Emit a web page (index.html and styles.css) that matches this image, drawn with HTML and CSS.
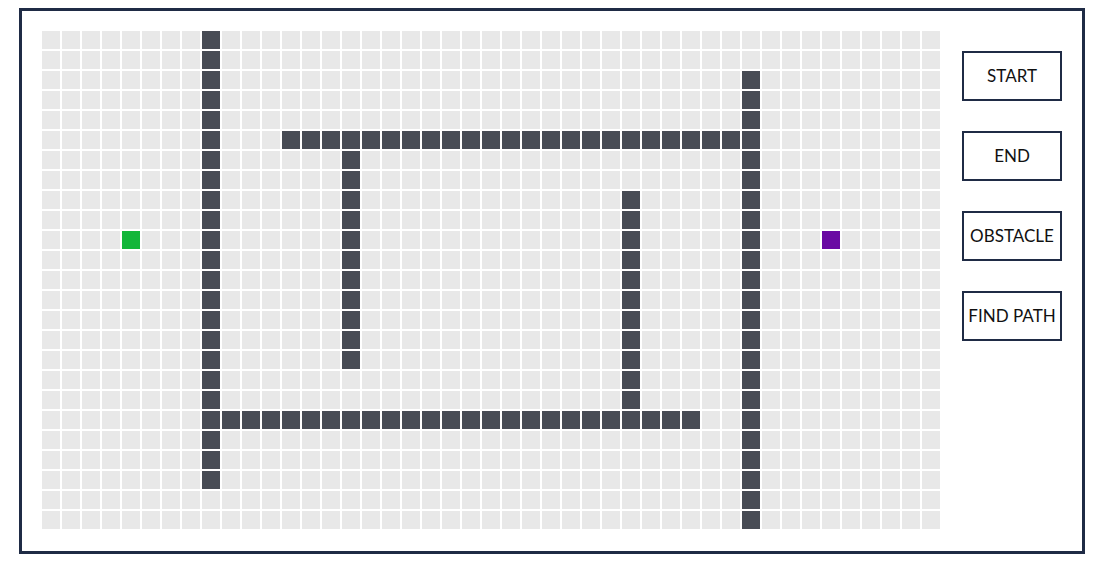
FILE: index.html
```html
<!DOCTYPE html>
<html lang="en">
<head>
<meta charset="utf-8">
<title>Path Finder</title>
<link rel="stylesheet" href="styles.css">
</head>
<body>
<main class="board">
  <div class="grid">
<i></i><i></i><i></i><i></i><i></i> <i></i><i></i><i></i><i class="w"></i><i></i> <i></i><i></i><i></i><i></i><i></i> <i></i><i></i><i></i><i></i><i></i> <i></i><i></i><i></i><i></i><i></i> <i></i><i></i><i></i><i></i><i></i> <i></i><i></i><i></i><i></i><i></i> <i></i><i></i><i></i><i></i><i></i> <i></i><i></i><i></i><i></i><i></i>
<i></i><i></i><i></i><i></i><i></i> <i></i><i></i><i></i><i class="w"></i><i></i> <i></i><i></i><i></i><i></i><i></i> <i></i><i></i><i></i><i></i><i></i> <i></i><i></i><i></i><i></i><i></i> <i></i><i></i><i></i><i></i><i></i> <i></i><i></i><i></i><i></i><i></i> <i></i><i></i><i></i><i></i><i></i> <i></i><i></i><i></i><i></i><i></i>
<i></i><i></i><i></i><i></i><i></i> <i></i><i></i><i></i><i class="w"></i><i></i> <i></i><i></i><i></i><i></i><i></i> <i></i><i></i><i></i><i></i><i></i> <i></i><i></i><i></i><i></i><i></i> <i></i><i></i><i></i><i></i><i></i> <i></i><i></i><i></i><i></i><i></i> <i class="w"></i><i></i><i></i><i></i><i></i> <i></i><i></i><i></i><i></i><i></i>
<i></i><i></i><i></i><i></i><i></i> <i></i><i></i><i></i><i class="w"></i><i></i> <i></i><i></i><i></i><i></i><i></i> <i></i><i></i><i></i><i></i><i></i> <i></i><i></i><i></i><i></i><i></i> <i></i><i></i><i></i><i></i><i></i> <i></i><i></i><i></i><i></i><i></i> <i class="w"></i><i></i><i></i><i></i><i></i> <i></i><i></i><i></i><i></i><i></i>
<i></i><i></i><i></i><i></i><i></i> <i></i><i></i><i></i><i class="w"></i><i></i> <i></i><i></i><i></i><i></i><i></i> <i></i><i></i><i></i><i></i><i></i> <i></i><i></i><i></i><i></i><i></i> <i></i><i></i><i></i><i></i><i></i> <i></i><i></i><i></i><i></i><i></i> <i class="w"></i><i></i><i></i><i></i><i></i> <i></i><i></i><i></i><i></i><i></i>
<i></i><i></i><i></i><i></i><i></i> <i></i><i></i><i></i><i class="w"></i><i></i> <i></i><i></i><i class="w"></i><i class="w"></i><i class="w"></i> <i class="w"></i><i class="w"></i><i class="w"></i><i class="w"></i><i class="w"></i> <i class="w"></i><i class="w"></i><i class="w"></i><i class="w"></i><i class="w"></i> <i class="w"></i><i class="w"></i><i class="w"></i><i class="w"></i><i class="w"></i> <i class="w"></i><i class="w"></i><i class="w"></i><i class="w"></i><i class="w"></i> <i class="w"></i><i></i><i></i><i></i><i></i> <i></i><i></i><i></i><i></i><i></i>
<i></i><i></i><i></i><i></i><i></i> <i></i><i></i><i></i><i class="w"></i><i></i> <i></i><i></i><i></i><i></i><i></i> <i class="w"></i><i></i><i></i><i></i><i></i> <i></i><i></i><i></i><i></i><i></i> <i></i><i></i><i></i><i></i><i></i> <i></i><i></i><i></i><i></i><i></i> <i class="w"></i><i></i><i></i><i></i><i></i> <i></i><i></i><i></i><i></i><i></i>
<i></i><i></i><i></i><i></i><i></i> <i></i><i></i><i></i><i class="w"></i><i></i> <i></i><i></i><i></i><i></i><i></i> <i class="w"></i><i></i><i></i><i></i><i></i> <i></i><i></i><i></i><i></i><i></i> <i></i><i></i><i></i><i></i><i></i> <i></i><i></i><i></i><i></i><i></i> <i class="w"></i><i></i><i></i><i></i><i></i> <i></i><i></i><i></i><i></i><i></i>
<i></i><i></i><i></i><i></i><i></i> <i></i><i></i><i></i><i class="w"></i><i></i> <i></i><i></i><i></i><i></i><i></i> <i class="w"></i><i></i><i></i><i></i><i></i> <i></i><i></i><i></i><i></i><i></i> <i></i><i></i><i></i><i></i><i class="w"></i> <i></i><i></i><i></i><i></i><i></i> <i class="w"></i><i></i><i></i><i></i><i></i> <i></i><i></i><i></i><i></i><i></i>
<i></i><i></i><i></i><i></i><i></i> <i></i><i></i><i></i><i class="w"></i><i></i> <i></i><i></i><i></i><i></i><i></i> <i class="w"></i><i></i><i></i><i></i><i></i> <i></i><i></i><i></i><i></i><i></i> <i></i><i></i><i></i><i></i><i class="w"></i> <i></i><i></i><i></i><i></i><i></i> <i class="w"></i><i></i><i></i><i></i><i></i> <i></i><i></i><i></i><i></i><i></i>
<i></i><i></i><i></i><i></i><i class="s"></i> <i></i><i></i><i></i><i class="w"></i><i></i> <i></i><i></i><i></i><i></i><i></i> <i class="w"></i><i></i><i></i><i></i><i></i> <i></i><i></i><i></i><i></i><i></i> <i></i><i></i><i></i><i></i><i class="w"></i> <i></i><i></i><i></i><i></i><i></i> <i class="w"></i><i></i><i></i><i></i><i class="e"></i> <i></i><i></i><i></i><i></i><i></i>
<i></i><i></i><i></i><i></i><i></i> <i></i><i></i><i></i><i class="w"></i><i></i> <i></i><i></i><i></i><i></i><i></i> <i class="w"></i><i></i><i></i><i></i><i></i> <i></i><i></i><i></i><i></i><i></i> <i></i><i></i><i></i><i></i><i class="w"></i> <i></i><i></i><i></i><i></i><i></i> <i class="w"></i><i></i><i></i><i></i><i></i> <i></i><i></i><i></i><i></i><i></i>
<i></i><i></i><i></i><i></i><i></i> <i></i><i></i><i></i><i class="w"></i><i></i> <i></i><i></i><i></i><i></i><i></i> <i class="w"></i><i></i><i></i><i></i><i></i> <i></i><i></i><i></i><i></i><i></i> <i></i><i></i><i></i><i></i><i class="w"></i> <i></i><i></i><i></i><i></i><i></i> <i class="w"></i><i></i><i></i><i></i><i></i> <i></i><i></i><i></i><i></i><i></i>
<i></i><i></i><i></i><i></i><i></i> <i></i><i></i><i></i><i class="w"></i><i></i> <i></i><i></i><i></i><i></i><i></i> <i class="w"></i><i></i><i></i><i></i><i></i> <i></i><i></i><i></i><i></i><i></i> <i></i><i></i><i></i><i></i><i class="w"></i> <i></i><i></i><i></i><i></i><i></i> <i class="w"></i><i></i><i></i><i></i><i></i> <i></i><i></i><i></i><i></i><i></i>
<i></i><i></i><i></i><i></i><i></i> <i></i><i></i><i></i><i class="w"></i><i></i> <i></i><i></i><i></i><i></i><i></i> <i class="w"></i><i></i><i></i><i></i><i></i> <i></i><i></i><i></i><i></i><i></i> <i></i><i></i><i></i><i></i><i class="w"></i> <i></i><i></i><i></i><i></i><i></i> <i class="w"></i><i></i><i></i><i></i><i></i> <i></i><i></i><i></i><i></i><i></i>
<i></i><i></i><i></i><i></i><i></i> <i></i><i></i><i></i><i class="w"></i><i></i> <i></i><i></i><i></i><i></i><i></i> <i class="w"></i><i></i><i></i><i></i><i></i> <i></i><i></i><i></i><i></i><i></i> <i></i><i></i><i></i><i></i><i class="w"></i> <i></i><i></i><i></i><i></i><i></i> <i class="w"></i><i></i><i></i><i></i><i></i> <i></i><i></i><i></i><i></i><i></i>
<i></i><i></i><i></i><i></i><i></i> <i></i><i></i><i></i><i class="w"></i><i></i> <i></i><i></i><i></i><i></i><i></i> <i class="w"></i><i></i><i></i><i></i><i></i> <i></i><i></i><i></i><i></i><i></i> <i></i><i></i><i></i><i></i><i class="w"></i> <i></i><i></i><i></i><i></i><i></i> <i class="w"></i><i></i><i></i><i></i><i></i> <i></i><i></i><i></i><i></i><i></i>
<i></i><i></i><i></i><i></i><i></i> <i></i><i></i><i></i><i class="w"></i><i></i> <i></i><i></i><i></i><i></i><i></i> <i></i><i></i><i></i><i></i><i></i> <i></i><i></i><i></i><i></i><i></i> <i></i><i></i><i></i><i></i><i class="w"></i> <i></i><i></i><i></i><i></i><i></i> <i class="w"></i><i></i><i></i><i></i><i></i> <i></i><i></i><i></i><i></i><i></i>
<i></i><i></i><i></i><i></i><i></i> <i></i><i></i><i></i><i class="w"></i><i></i> <i></i><i></i><i></i><i></i><i></i> <i></i><i></i><i></i><i></i><i></i> <i></i><i></i><i></i><i></i><i></i> <i></i><i></i><i></i><i></i><i class="w"></i> <i></i><i></i><i></i><i></i><i></i> <i class="w"></i><i></i><i></i><i></i><i></i> <i></i><i></i><i></i><i></i><i></i>
<i></i><i></i><i></i><i></i><i></i> <i></i><i></i><i></i><i class="w"></i><i class="w"></i> <i class="w"></i><i class="w"></i><i class="w"></i><i class="w"></i><i class="w"></i> <i class="w"></i><i class="w"></i><i class="w"></i><i class="w"></i><i class="w"></i> <i class="w"></i><i class="w"></i><i class="w"></i><i class="w"></i><i class="w"></i> <i class="w"></i><i class="w"></i><i class="w"></i><i class="w"></i><i class="w"></i> <i class="w"></i><i class="w"></i><i class="w"></i><i></i><i></i> <i class="w"></i><i></i><i></i><i></i><i></i> <i></i><i></i><i></i><i></i><i></i>
<i></i><i></i><i></i><i></i><i></i> <i></i><i></i><i></i><i class="w"></i><i></i> <i></i><i></i><i></i><i></i><i></i> <i></i><i></i><i></i><i></i><i></i> <i></i><i></i><i></i><i></i><i></i> <i></i><i></i><i></i><i></i><i></i> <i></i><i></i><i></i><i></i><i></i> <i class="w"></i><i></i><i></i><i></i><i></i> <i></i><i></i><i></i><i></i><i></i>
<i></i><i></i><i></i><i></i><i></i> <i></i><i></i><i></i><i class="w"></i><i></i> <i></i><i></i><i></i><i></i><i></i> <i></i><i></i><i></i><i></i><i></i> <i></i><i></i><i></i><i></i><i></i> <i></i><i></i><i></i><i></i><i></i> <i></i><i></i><i></i><i></i><i></i> <i class="w"></i><i></i><i></i><i></i><i></i> <i></i><i></i><i></i><i></i><i></i>
<i></i><i></i><i></i><i></i><i></i> <i></i><i></i><i></i><i class="w"></i><i></i> <i></i><i></i><i></i><i></i><i></i> <i></i><i></i><i></i><i></i><i></i> <i></i><i></i><i></i><i></i><i></i> <i></i><i></i><i></i><i></i><i></i> <i></i><i></i><i></i><i></i><i></i> <i class="w"></i><i></i><i></i><i></i><i></i> <i></i><i></i><i></i><i></i><i></i>
<i></i><i></i><i></i><i></i><i></i> <i></i><i></i><i></i><i></i><i></i> <i></i><i></i><i></i><i></i><i></i> <i></i><i></i><i></i><i></i><i></i> <i></i><i></i><i></i><i></i><i></i> <i></i><i></i><i></i><i></i><i></i> <i></i><i></i><i></i><i></i><i></i> <i class="w"></i><i></i><i></i><i></i><i></i> <i></i><i></i><i></i><i></i><i></i>
<i></i><i></i><i></i><i></i><i></i> <i></i><i></i><i></i><i></i><i></i> <i></i><i></i><i></i><i></i><i></i> <i></i><i></i><i></i><i></i><i></i> <i></i><i></i><i></i><i></i><i></i> <i></i><i></i><i></i><i></i><i></i> <i></i><i></i><i></i><i></i><i></i> <i class="w"></i><i></i><i></i><i></i><i></i> <i></i><i></i><i></i><i></i><i></i>
  </div>
  <nav class="controls">
    <button class="btn" type="button">START</button>
    <button class="btn" type="button">END</button>
    <button class="btn" type="button">OBSTACLE</button>
    <button class="btn" type="button">FIND PATH</button>
  </nav>
</main>
</body>
</html>
```

FILE: styles.css
```css
html, body {
  margin: 0;
  padding: 0;
  background: #ffffff;
}

body {
  padding: 8px 0 0 19px;
  font-family: "Lato", "Liberation Sans", sans-serif;
}

.board {
  box-sizing: border-box;
  width: 1066px;
  height: 546px;
  border: 3px solid #1f2b45;
  padding: 20px 20px 22px 20px;
  display: flex;
  align-items: flex-start;
  gap: 22px;
}

.grid {
  display: grid;
  grid-template-columns: repeat(45, 18px);
  grid-auto-rows: 18px;
  gap: 2px;
}

.grid i {
  display: block;
  background: #e8e8e8;
}

.grid i.w {
  background: #484c55;
}

.grid i.s {
  background: #13b63a;
}

.grid i.e {
  background: #6a0aa3;
}

.controls {
  display: flex;
  flex-direction: column;
  gap: 30px;
  padding-top: 20px;
}

.btn {
  box-sizing: border-box;
  width: 100px;
  height: 50px;
  margin: 0;
  padding: 0 0 2px 0;
  border: 2px solid #1f2b45;
  border-radius: 0;
  background: #ffffff;
  color: #111111;
  font-family: "Lato", "Liberation Sans", sans-serif;
  font-size: 17px;
  text-align: center;
  cursor: pointer;
}
```
